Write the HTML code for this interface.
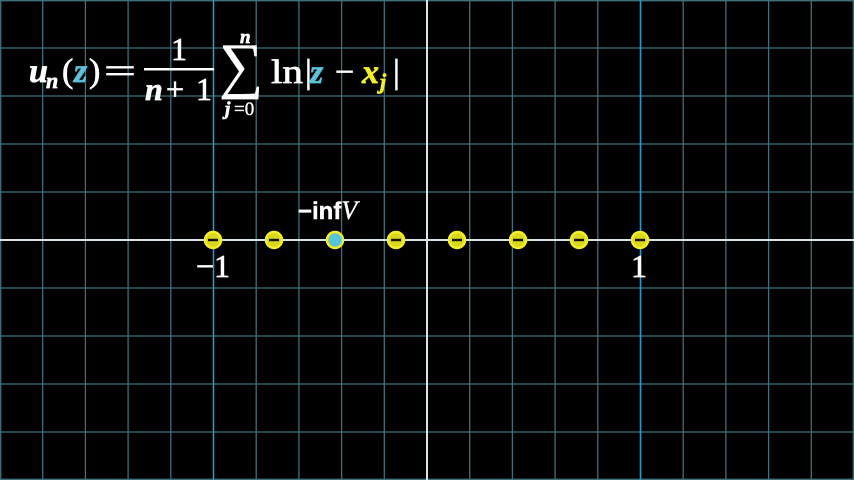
<!DOCTYPE html>
<html><head><meta charset="utf-8"><style>
html,body{margin:0;padding:0;background:#000;width:854px;height:480px;overflow:hidden}
svg{display:block}
</style></head><body>
<svg width="854" height="480" viewBox="0 0 854 480" xmlns="http://www.w3.org/2000/svg">
<rect width="854" height="480" fill="#000"/>
<g stroke="#3f6f7c" stroke-width="1.3">
<line x1="0.7" y1="0" x2="0.7" y2="480"/>
<line x1="42.7" y1="0" x2="42.7" y2="480"/>
<line x1="85.4" y1="0" x2="85.4" y2="480"/>
<line x1="128.1" y1="0" x2="128.1" y2="480"/>
<line x1="170.8" y1="0" x2="170.8" y2="480"/>
<line x1="256.2" y1="0" x2="256.2" y2="480"/>
<line x1="298.9" y1="0" x2="298.9" y2="480"/>
<line x1="341.6" y1="0" x2="341.6" y2="480"/>
<line x1="384.3" y1="0" x2="384.3" y2="480"/>
<line x1="469.7" y1="0" x2="469.7" y2="480"/>
<line x1="512.4" y1="0" x2="512.4" y2="480"/>
<line x1="555.1" y1="0" x2="555.1" y2="480"/>
<line x1="597.8" y1="0" x2="597.8" y2="480"/>
<line x1="683.2" y1="0" x2="683.2" y2="480"/>
<line x1="725.9" y1="0" x2="725.9" y2="480"/>
<line x1="768.6" y1="0" x2="768.6" y2="480"/>
<line x1="811.3" y1="0" x2="811.3" y2="480"/>
<line x1="853.3" y1="0" x2="853.3" y2="480"/>
<line x1="0" y1="0.7" x2="854" y2="0.7"/>
<line x1="0" y1="48" x2="854" y2="48"/>
<line x1="0" y1="96" x2="854" y2="96"/>
<line x1="0" y1="144" x2="854" y2="144"/>
<line x1="0" y1="192" x2="854" y2="192"/>
<line x1="0" y1="288" x2="854" y2="288"/>
<line x1="0" y1="336" x2="854" y2="336"/>
<line x1="0" y1="384" x2="854" y2="384"/>
<line x1="0" y1="432" x2="854" y2="432"/>
<line x1="0" y1="479.3" x2="854" y2="479.3"/>
</g>
<g stroke="#1a9ccc" stroke-width="1.6">
<line x1="213.5" y1="0" x2="213.5" y2="480"/>
<line x1="640.5" y1="0" x2="640.5" y2="480"/>
</g>
<g stroke="#d8e4e8" stroke-width="2">
<line x1="427" y1="0" x2="427" y2="480"/>
<line x1="0" y1="240" x2="854" y2="240"/>
</g>
<g>
<g fill="#d8d820" stroke="#f4f020" stroke-width="2.5">
<circle cx="213" cy="240" r="8"/>
<circle cx="274" cy="240" r="8"/>
<circle cx="396" cy="240" r="8"/>
<circle cx="457" cy="240" r="8"/>
<circle cx="518" cy="240" r="8"/>
<circle cx="579" cy="240" r="8"/>
<circle cx="640" cy="240" r="8"/>
</g>
<circle cx="335" cy="240" r="8" fill="#58c4dc" stroke="#f4f020" stroke-width="2.5"/>
<g stroke="#111" stroke-width="2.4">
<line x1="208" y1="240" x2="218" y2="240"/>
<line x1="269" y1="240" x2="279" y2="240"/>
<line x1="391" y1="240" x2="401" y2="240"/>
<line x1="452" y1="240" x2="462" y2="240"/>
<line x1="513" y1="240" x2="523" y2="240"/>
<line x1="574" y1="240" x2="584" y2="240"/>
<line x1="635" y1="240" x2="645" y2="240"/>
</g>
</g>
<g fill="#fff" stroke="#fff" stroke-width="0.7" font-family="'Liberation Serif',serif">
<text x="196" y="277" font-size="32">−1</text>
<text x="631" y="277" font-size="32">1</text>
<text x="298" y="219" font-size="24" stroke-width="0.4" font-family="'Liberation Sans',sans-serif" font-weight="bold">−inf<tspan font-family="'Liberation Serif',serif" font-style="italic" font-weight="normal" font-size="26">V</tspan></text>

<text x="29" y="82" font-size="34" font-style="italic" font-weight="bold">u</text>
<text x="46" y="88" font-size="22" font-style="italic" font-weight="bold">n</text>
<text x="62" y="82" font-size="34">(</text>
<text x="74" y="82" font-size="34" font-style="italic" font-weight="bold" fill="#58c4dc" stroke="#58c4dc">z</text>
<text x="89" y="82" font-size="34">)</text>
<text x="104" y="82" font-size="34" textLength="32" lengthAdjust="spacingAndGlyphs">=</text>

<text x="171" y="60" font-size="32">1</text>
<rect x="144" y="68" width="70" height="2.5" stroke="none"/>
<text x="145" y="100" font-size="32" font-style="italic" font-weight="bold">n</text>
<text x="166" y="100" font-size="32">+</text>
<text x="196" y="100" font-size="32">1</text>

<text x="219" y="86" font-size="62" stroke-width="0.3">∑</text>
<text x="240" y="43" font-size="19" font-style="italic" font-weight="bold">n</text>
<text x="225" y="115" font-size="19" font-style="italic" font-weight="bold">j</text>
<text x="234" y="115" font-size="19" stroke-width="0.4">=0</text>

<text x="271" y="83" font-size="34" textLength="32" lengthAdjust="spacingAndGlyphs">ln</text>
<text x="305" y="83" font-size="34">|</text>
<text x="310" y="83" font-size="34" font-style="italic" font-weight="bold" fill="#58c4dc" stroke="#58c4dc">z</text>
<text x="335" y="83" font-size="34">−</text>
<text x="362" y="83" font-size="34" font-style="italic" font-weight="bold" fill="#f4f020" stroke="#f4f020">x</text>
<text x="380" y="89" font-size="22" font-style="italic" font-weight="bold" fill="#f4f020" stroke="#f4f020">j</text>
<text x="393" y="83" font-size="34">|</text>
</g>
</svg>
</body></html>
